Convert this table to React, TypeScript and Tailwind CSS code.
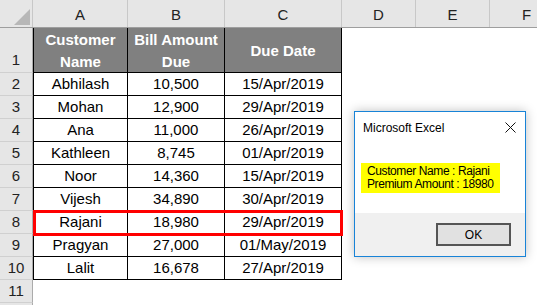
import React from "react";

const cols = [
  { key: "A", w: "w-[95px]" },
  { key: "B", w: "w-[97px]" },
  { key: "C", w: "w-[117px]" },
  { key: "D", w: "w-[74px]" },
  { key: "E", w: "w-[74px]" },
  { key: "F", w: "w-[74px]" },
];

const rows = [
  ["Abhilash", "10,500", "15/Apr/2019"],
  ["Mohan", "12,900", "29/Apr/2019"],
  ["Ana", "11,000", "26/Apr/2019"],
  ["Kathleen", "8,745", "01/Apr/2019"],
  ["Noor", "14,360", "15/Apr/2019"],
  ["Vijesh", "34,890", "30/Apr/2019"],
  ["Rajani", "18,980", "29/Apr/2019"],
  ["Pragyan", "27,000", "01/May/2019"],
  ["Lalit", "16,678", "27/Apr/2019"],
];

const font = "font-['Liberation_Sans',Arial,sans-serif]";

function RowHead({ n, tall }: { n: number; tall?: boolean }) {
  return (
    <div
      className={`w-[33px] shrink-0 bg-[#e6e6e6] border-r border-b border-r-[#ababab] border-b-[#d0d0d0] flex justify-center text-[15px] text-[#222] ${
        tall ? "h-[45px] items-end pb-[1px]" : "h-[23px] items-center"
      }`}
    >
      {n}
    </div>
  );
}

function MsgBox() {
  return (
    <div className="absolute left-[354px] top-[111px] w-[172px] h-[146px] bg-white border border-[#1883d7] shadow-[0_0_10px_rgba(0,0,0,0.25)] flex flex-col font-['Liberation_Sans',Arial,sans-serif]">
      <div className="h-[30px] flex items-center justify-between pl-[8px] pr-[9px] text-[12px] text-black">
        <span className="pt-[1px]">Microsoft Excel</span>
        <svg width="11" height="11" viewBox="0 0 11 11">
          <path d="M0.5 0.5 L10.5 10.5 M10.5 0.5 L0.5 10.5" stroke="#111" strokeWidth="1" />
        </svg>
      </div>
      <div className="flex-1 pl-[6px] pt-[21px]">
        <div className="w-[139px] h-[30px] bg-[#ffff00] px-[6px] flex flex-col justify-center whitespace-nowrap text-[12px] tracking-[-0.4px] leading-[13px] text-black">
          <span>Customer Name : Rajani</span>
          <span>Premium Amount : 18980</span>
        </div>
      </div>
      <div className="h-[43px] bg-[#f0f0f0] flex items-start justify-end pr-[14px] pt-[10px]">
        <div className="w-[75px] h-[23px] border-2 border-[#555] bg-[#e1e1e1] flex items-center justify-center text-[12px] text-black">
          OK
        </div>
      </div>
    </div>
  );
}

export default function App() {
  return (
    <div className={`relative w-[537px] h-[305px] overflow-hidden bg-white ${font}`}>
      {/* column headers */}
      <div className="flex h-[28px] bg-[#e6e6e6] border-b border-[#9e9e9e]">
        <div className="w-[33px] shrink-0 border-r border-[#c8c8c8] relative">
          <svg className="absolute left-[14px] top-[9px]" width="16" height="16" viewBox="0 0 16 16">
            <polygon points="16,0 16,16 0,16" fill="#b7b7b7" />
          </svg>
        </div>
        {cols.map((c) => (
          <div
            key={c.key}
            className={`${c.w} shrink-0 border-r border-[#c8c8c8] flex items-center justify-center pt-[3px] text-[15px] text-[#222]`}
          >
            {c.key}
          </div>
        ))}
      </div>

      {/* row 1 header */}
      <div className="flex">
        <RowHead n={1} tall />
        <div className="w-[95px] h-[45px] shrink-0 bg-[#808080] border-l border-r border-b border-black flex items-center justify-center text-center text-white font-bold text-[15px] leading-[22px] pt-[1px]">
          Customer
          <br />
          Name
        </div>
        <div className="w-[97px] h-[45px] shrink-0 bg-[#808080] border-r border-b border-black flex items-center justify-center text-center text-white font-bold text-[15px] leading-[22px] pt-[1px]">
          Bill Amount
          <br />
          Due
        </div>
        <div className="w-[117px] h-[45px] shrink-0 bg-[#808080] border-r border-b border-black flex items-center justify-center text-white font-bold text-[15px] pt-[2px]">
          Due Date
        </div>
      </div>

      {rows.map((r, i) => (
        <div key={i} className="flex">
          <RowHead n={i + 2} />
          <div className="w-[95px] h-[23px] shrink-0 border-l border-r border-b border-black flex items-center justify-center text-[15px] text-black">
            {r[0]}
          </div>
          <div className="w-[97px] h-[23px] shrink-0 border-r border-b border-black flex items-center justify-center text-[15px] text-black">
            {r[1]}
          </div>
          <div className="w-[117px] h-[23px] shrink-0 border-r border-b border-black flex items-center justify-center text-[15px] text-black">
            {r[2]}
          </div>
        </div>
      ))}

      <div className="flex">
        <RowHead n={11} />
      </div>
      <div className="flex">
        <div className="w-[33px] h-[23px] bg-[#e6e6e6] border-r border-[#ababab]" />
      </div>

      {/* highlight around row 8 */}
      <div className="absolute left-[33px] top-[210px] w-[310px] h-[26px] border-[3px] border-[#ff0000]" />

      <MsgBox />
    </div>
  );
}
